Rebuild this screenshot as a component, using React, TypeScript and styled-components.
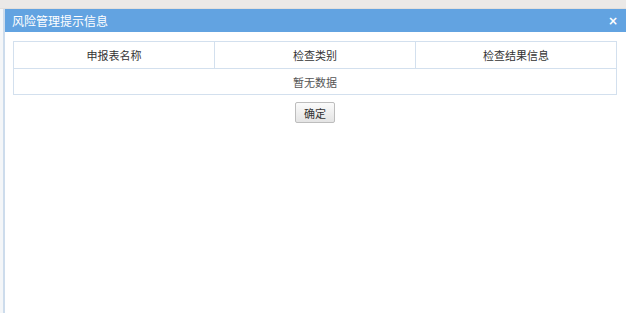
import React from "react";
import styled, { createGlobalStyle } from "styled-components";

const Global = createGlobalStyle`
  html, body {
    margin: 0;
    padding: 0;
    background: #ffffff;
    font-family: "Liberation Sans", "Noto Sans CJK SC", sans-serif;
    font-size: 12px;
  }
`;

const Page = styled.div`
  width: 626px;
  height: 332px;
  display: flex;
  flex-direction: column;
  overflow: hidden;
`;

const TopStrip = styled.div`
  height: 9px;
  background: #ebe9e7;
  border-bottom: 1px solid #e2dfdc;
  box-sizing: border-box;
`;

const Body = styled.div`
  display: flex;
  flex: 1;
`;

const SideRail = styled.div`
  width: 5px;
  height: 304px;
  box-sizing: border-box;
  border-right: 2px solid #cddcec;
  background: #f4f6f8;
`;

const Dialog = styled.div`
  flex: 1;
  display: flex;
  flex-direction: column;
`;

const TitleBar = styled.div`
  height: 23px;
  background: #62a3e1;
  display: flex;
  align-items: center;
  justify-content: space-between;
  padding: 0 8px 0 7px;
  color: #ffffff;
  font-family: "Noto Sans CJK SC", sans-serif;
  font-size: 12px;
`;

const Close = styled.span`
  font-family: "DejaVu Sans", sans-serif;
  font-weight: bold;
  font-size: 12px;
  color: #ffffff;
`;

const Content = styled.div`
  padding: 9px 9px 0 8px;
  display: flex;
  flex-direction: column;
  align-items: center;
`;

const Table = styled.table`
  width: 100%;
  border-collapse: collapse;
  font-family: "Noto Sans CJK SC", sans-serif;
  font-size: 11px;
  table-layout: fixed;
`;

const Th = styled.th`
  height: 26px;
  padding: 0;
  border: 1px solid #d3e0ee;
  font-weight: normal;
  text-align: center;
  color: #333333;
`;

const Td = styled.td`
  height: 25px;
  padding: 0;
  border: 1px solid #d3e0ee;
  text-align: center;
  color: #555555;
`;

const Button = styled.button`
  margin-top: 7px;
  width: 40px;
  height: 21px;
  padding: 0;
  border: 1px solid #bdbdbd;
  border-radius: 2px;
  background: linear-gradient(#fbfbfb, #e4e4e4);
  font-family: "Noto Sans CJK SC", sans-serif;
  font-size: 11px;
  color: #333333;
`;

export default function App() {
  return (
    <Page>
      <Global />
      <TopStrip />
      <Body>
        <SideRail />
        <Dialog>
          <TitleBar>
            <span>风险管理提示信息</span>
            <Close>×</Close>
          </TitleBar>
          <Content>
            <Table>
              <thead>
                <tr>
                  <Th>申报表名称</Th>
                  <Th>检查类别</Th>
                  <Th>检查结果信息</Th>
                </tr>
              </thead>
              <tbody>
                <tr>
                  <Td colSpan={3}>暂无数据</Td>
                </tr>
              </tbody>
            </Table>
            <Button>确定</Button>
          </Content>
        </Dialog>
      </Body>
    </Page>
  );
}
